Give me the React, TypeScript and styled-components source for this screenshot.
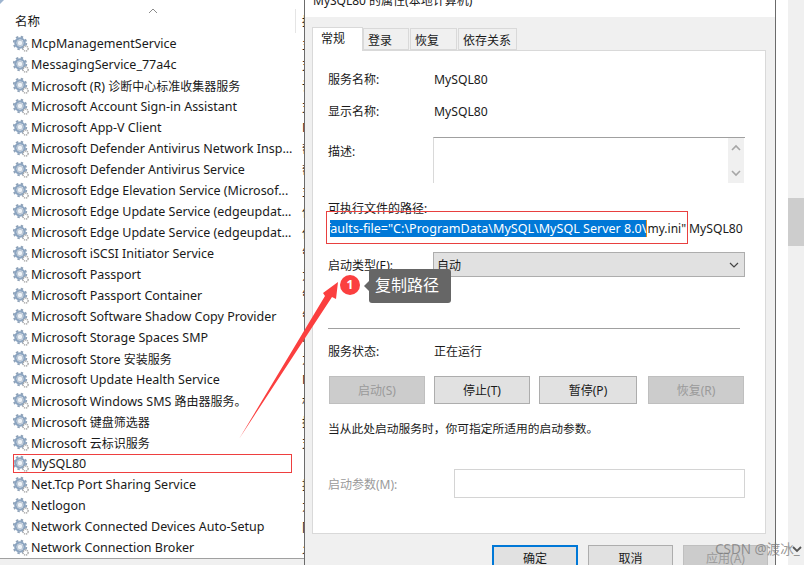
import styled, { createGlobalStyle } from "styled-components";

const GlobalStyle = createGlobalStyle`
  html, body {
    margin: 0;
    padding: 0;
    background: #fff;
  }
  body {
    font-family: "Noto Sans", "Noto Sans CJK SC", sans-serif;
    font-size: 12.5px;
    color: #1a1a1a;
  }
`;

const Screen = styled.div`
  position: relative;
  display: flex;
  width: 811px;
  height: 565px;
  overflow: hidden;
  background: #fff;
`;

/* services list on the left */
const ListPane = styled.div`
  flex: none;
  width: 304px;
  height: 558px;
  border-bottom: 1px solid #a0a0a0;
  overflow: hidden;
`;

const ListHeader = styled.div`
  position: relative;
  display: flex;
  align-items: flex-end;
  height: 33px;
  padding-left: 15px;
  box-sizing: border-box;
  &::before {
    content: "";
    position: absolute;
    left: 0;
    top: 0;
    border-style: solid;
    border-width: 4px 4px 0 0;
    border-color: #9db4cf transparent transparent transparent;
  }
`;

const HeaderName = styled.span`
  flex: none;
  width: 280px;
  height: 24px;
  line-height: 26px;
  border-right: 1px solid #e5e5e5;
`;

const HeaderNext = styled.span`
  padding-left: 6px;
  height: 24px;
  line-height: 26px;
  white-space: nowrap;
`;

const SortArrow = styled.svg`
  position: absolute;
  left: 148px;
  top: 8px;
`;

const Row = styled.div`
  display: flex;
  align-items: center;
  height: 21px;
`;

const NameCell = styled.div<{ $focused?: boolean }>`
  flex: none;
  display: flex;
  align-items: center;
  gap: 2px;
  width: 279px;
  height: 19px;
  margin-left: 13px;
  box-sizing: border-box;
  outline: ${(p) => (p.$focused ? "1px solid #ee3f3f" : "none")};
  outline-offset: -1px;
  white-space: nowrap;
  overflow: hidden;
  & > svg {
    flex: none;
  }
`;

const NameText = styled.span`
  flex: none;
`;

const ListCjk = styled.span`
  font-size: 12px;
`;

const DescCell = styled.div`
  flex: none;
  margin-left: 10px;
  white-space: nowrap;
`;

/* properties dialog */
const Dialog = styled.div`
  flex: none;
  display: flex;
  flex-direction: column;
  width: 472px;
  height: 565px;
  box-sizing: border-box;
  border-left: 1px solid #6b6b6b;
  border-right: 1px solid #6b6b6b;
  background: #f0f0f0;
  font-size: 12px;
  overflow: hidden;
`;

const TitleBar = styled.div`
  flex: none;
  height: 17px;
  background: #fff;
  padding-left: 8px;
  overflow: hidden;
`;

const TitleText = styled.div`
  margin-top: -8px;
  line-height: 18px;
  white-space: nowrap;
`;

const Tabs = styled.div`
  flex: none;
  display: flex;
  align-items: flex-end;
  height: 33px;
  padding-left: 7px;
`;

const Tab = styled.div<{ $active?: boolean; $w: number }>`
  width: ${(p) => p.$w}px;
  height: ${(p) => (p.$active ? 24 : 22)}px;
  margin-right: ${(p) => (p.$active ? 0 : 1)}px;
  margin-bottom: ${(p) => (p.$active ? -1 : 0)}px;
  box-sizing: border-box;
  padding-left: ${(p) => (p.$active ? 8 : 4)}px;
  line-height: ${(p) => (p.$active ? 21 : 24)}px;
  border: 1px solid #d9d9d9;
  border-bottom: ${(p) => (p.$active ? "none" : "1px solid #d9d9d9")};
  background: ${(p) => (p.$active ? "#fff" : "#f0f0f0")};
  position: relative;
  z-index: ${(p) => (p.$active ? 1 : 0)};
`;

const Panel = styled.div`
  flex: none;
  width: 454px;
  height: 484px;
  margin-left: 7px;
  box-sizing: border-box;
  border: 1px solid #d9d9d9;
  background: #fff;
  padding: 18px 0 0 15px;
`;

const FieldRow = styled.div<{ $top: number; $align?: string }>`
  display: flex;
  align-items: ${(p) => p.$align ?? "center"};
  margin-top: ${(p) => p.$top}px;
  min-height: 20px;
`;

const FieldLabel = styled.div<{ $w?: number; $dim?: boolean; $top?: number }>`
  flex: none;
  width: ${(p) => p.$w ?? 106}px;
  height: 20px;
  line-height: 22px;
  margin-top: ${(p) => p.$top ?? 0}px;
  color: ${(p) => (p.$dim ? "#9a9a9a" : "inherit")};
`;

const FieldValue = styled.span`
  font-size: 12.2px;
`;

const Block = styled.div<{ $top: number; $size?: number }>`
  height: 20px;
  line-height: 22px;
  margin-top: ${(p) => p.$top}px;
  font-size: ${(p) => p.$size ?? 12}px;
  white-space: nowrap;
`;

const DescBox = styled.div`
  display: flex;
  justify-content: flex-end;
  width: 312px;
  height: 46px;
  box-sizing: border-box;
  border: 1px solid #d9d9d9;
  border-top-color: #a0a0a0;
  border-right: none;
  border-bottom: none;
`;

const MiniScroll = styled.div`
  display: flex;
  flex-direction: column;
  justify-content: space-between;
  align-items: center;
  width: 16px;
  padding: 6px 0;
  box-sizing: border-box;
  background: #f0f0f0;
  margin-right: 1px;
`;

const PathLine = styled.div`
  display: flex;
  align-items: center;
  margin: -7px 0 0 -2px;
  font-size: 12.55px;
  white-space: nowrap;
`;

const PathBox = styled.div`
  flex: none;
  display: flex;
  align-items: center;
  width: 362px;
  height: 33px;
  padding: 1px 0 0 3px;
  box-sizing: border-box;
  border: 1px solid #e8403f;
  overflow: hidden;
`;

const PathClip = styled.div`
  display: flex;
  overflow: hidden;
  width: 357px;
`;

const Selected = styled.span`
  flex: none;
  margin-left: -4px;
  background: #0078d7;
  color: #fff;
  line-height: 17px;
  border-right: 1px solid #e08a1e;
`;

const PathRest = styled.span`
  flex: none;
  font-size: 12px;
  line-height: 17px;
`;

const PathTail = styled.span`
  margin-left: 1px;
  padding-top: 1px;
  font-size: 12.2px;
`;

const SelectBox = styled.div`
  display: flex;
  align-items: center;
  justify-content: space-between;
  width: 312px;
  height: 25px;
  padding: 0 5px 0 3px;
  box-sizing: border-box;
  border: 1px solid #adadad;
  background: #e1e1e1;
`;

const Divider = styled.div`
  width: 412px;
  height: 1px;
  margin-top: 51px;
  background: #a0a0a0;
`;

const ActionRow = styled.div`
  display: flex;
  gap: 9px;
  width: 415px;
  margin: 15px 0 0 1px;
  & > div {
    line-height: 27px;
  }
`;

const Btn = styled.div<{ $w?: number; $off?: boolean; $primary?: boolean; $last?: boolean }>`
  flex: none;
  width: ${(p) => p.$w ?? 96}px;
  height: 28px;
  margin-left: ${(p) => (p.$last ? "auto" : 0)};
  box-sizing: border-box;
  text-align: center;
  line-height: 25px;
  border: 1px solid ${(p) => (p.$off ? "#bfbfbf" : "#adadad")};
  background: ${(p) => (p.$off ? "#cccccc" : "#e1e1e1")};
  color: ${(p) => (p.$off ? "#9a9a9a" : "inherit")};
  ${(p) => p.$primary && "border: 2px solid #0078d7; line-height: 23px;"}
`;

const ParamInput = styled.div`
  width: 291px;
  height: 29px;
  box-sizing: border-box;
  border: 1px solid #d4d4d4;
`;

const Footer = styled.div`
  flex: none;
  display: flex;
  justify-content: flex-end;
  gap: 10px;
  margin-top: 11px;
  padding-right: 7px;
`;

/* outer scrollbar of the services window */
const SideStrip = styled.div`
  flex: none;
  display: flex;
  width: 35px;
  height: 565px;
  padding-left: 12px;
  box-sizing: border-box;
`;

const ScrollTrack = styled.div`
  position: relative;
  width: 16px;
  height: 565px;
  background: #f0f0f0;
`;

const ScrollThumb = styled.div`
  position: absolute;
  left: 0;
  top: 198px;
  width: 16px;
  height: 48px;
  background: #cdcdcd;
`;

const ScrollDown = styled.svg`
  position: absolute;
  left: 4px;
  top: 546px;
`;

const ListFoot = styled.div`
  position: absolute;
  left: 0;
  top: 559px;
  width: 304px;
  height: 6px;
  background: #f0f0f0;
`;

/* annotations over the window */
const ArrowLayer = styled.svg`
  position: absolute;
  left: 0;
  top: 0;
  pointer-events: none;
`;

const Badge = styled.div`
  position: absolute;
  left: 340px;
  top: 275px;
  width: 20px;
  height: 20px;
  border-radius: 50%;
  background: #fb3f3f;
  color: #fff;
  font-size: 12px;
  font-weight: 700;
  line-height: 20px;
  text-align: center;
`;

const Tip = styled.div`
  position: absolute;
  left: 369px;
  top: 269px;
  width: 82px;
  height: 34px;
  padding-left: 6px;
  box-sizing: border-box;
  border-radius: 3px;
  background: #666;
  color: #fff;
  font-size: 16px;
  line-height: 33px;
  &::before {
    content: "";
    position: absolute;
    left: -5px;
    top: 12px;
    border-style: solid;
    border-width: 5px 5px 5px 0;
    border-color: transparent #666 transparent transparent;
  }
`;

const Watermark = styled.div`
  position: absolute;
  left: 715px;
  top: 540px;
  font-size: 13.5px;
  line-height: 18px;
  color: rgba(120, 120, 120, 0.75);
  white-space: nowrap;
`;

const services: [string, string][] = [
  ["McpManagementService", "主"],
  ["MessagingService_77a4c", "支"],
  ["Microsoft (R) 诊断中心标准收集器服务", "诊"],
  ["Microsoft Account Sign-in Assistant", "支"],
  ["Microsoft App-V Client", "M"],
  ["Microsoft Defender Antivirus Network Insp...", "帮"],
  ["Microsoft Defender Antivirus Service", "帮"],
  ["Microsoft Edge Elevation Service (Microsof...", "主"],
  ["Microsoft Edge Update Service (edgeupdat...", "使"],
  ["Microsoft Edge Update Service (edgeupdat...", "使"],
  ["Microsoft iSCSI Initiator Service", "管"],
  ["Microsoft Passport", "为"],
  ["Microsoft Passport Container", "管"],
  ["Microsoft Software Shadow Copy Provider", "管"],
  ["Microsoft Storage Spaces SMP", "M"],
  ["Microsoft Store 安装服务", "为"],
  ["Microsoft Update Health Service", "M"],
  ["Microsoft Windows SMS 路由器服务。", "根"],
  ["Microsoft 键盘筛选器", "控"],
  ["Microsoft 云标识服务", "支"],
  ["MySQL80", ""],
  ["Net.Tcp Port Sharing Service", "提"],
  ["Netlogon", "为"],
  ["Network Connected Devices Auto-Setup", "网"],
  ["Network Connection Broker", "允"],
];

// list text mixes latin and chinese, and the chinese runs are set smaller
function mixed(text: string) {
  return text.split(/([\u4e00-\u9fff。]+)/).map((part, i) =>
    i % 2 ? <ListCjk key={i}>{part}</ListCjk> : part
  );
}

function Gear() {
  return (
    <svg width="16" height="18" viewBox="0 0 16 18">
      <circle cx="7" cy="8" r="6.3" fill="none" stroke="#8fa2b8" strokeWidth="1.8" strokeDasharray="2.4 2.55" />
      <circle cx="7" cy="8" r="4.6" fill="none" stroke="#8ba4c0" strokeWidth="2.4" />
      <circle cx="7" cy="8" r="2.8" fill="#eef3f8" stroke="#a3b3c4" strokeWidth="0.8" />
      <circle cx="12.6" cy="13.6" r="2.5" fill="#fff" stroke="#a6a6a6" strokeWidth="1.5" strokeDasharray="1.3 0.8" />
      <circle cx="12.6" cy="13.6" r="0.9" fill="#fff" />
    </svg>
  );
}

function Chevron({ up }: { up: boolean }) {
  return (
    <svg width="10" height="7" viewBox="0 0 10 7">
      <path d={up ? "M1 6 L5 2 L9 6" : "M1 1 L5 5 L9 1"} fill="none" stroke="#a6a6a6" strokeWidth="1.6" />
    </svg>
  );
}

export default function App() {
  return (
    <Screen>
      <GlobalStyle />
      <ListPane>
        <ListHeader>
          <HeaderName>名称</HeaderName>
          <HeaderNext>描述</HeaderNext>
          <SortArrow width="10" height="6" viewBox="0 0 10 6">
            <path d="M1 5 L5 1 L9 5" fill="none" stroke="#8a8a8a" strokeWidth="1" />
          </SortArrow>
        </ListHeader>
        {services.map(([name, desc], i) => (
          <Row key={i}>
            <NameCell $focused={name === "MySQL80"}>
              <Gear />
              <NameText>{mixed(name)}</NameText>
            </NameCell>
            <DescCell>{desc}</DescCell>
          </Row>
        ))}
      </ListPane>
      <ListFoot />

      <Dialog>
        <TitleBar>
          <TitleText>MySQL80 的属性(本地计算机)</TitleText>
        </TitleBar>
        <Tabs>
          <Tab $active $w={51}>常规</Tab>
          <Tab $w={46}>登录</Tab>
          <Tab $w={47}>恢复</Tab>
          <Tab $w={59}>依存关系</Tab>
        </Tabs>
        <Panel>
          <FieldRow $top={0}>
            <FieldLabel>服务名称:</FieldLabel>
            <FieldValue>MySQL80</FieldValue>
          </FieldRow>
          <FieldRow $top={12}>
            <FieldLabel>显示名称:</FieldLabel>
            <FieldValue>MySQL80</FieldValue>
          </FieldRow>
          <FieldRow $top={16} $align="flex-start">
            <FieldLabel $w={105} $top={4}>描述:</FieldLabel>
            <DescBox>
              <MiniScroll>
                <Chevron up />
                <Chevron up={false} />
              </MiniScroll>
            </DescBox>
          </FieldRow>
          <Block $top={15}>可执行文件的路径:</Block>
          <PathLine>
            <PathBox>
              <PathClip>
                <Selected>faults-file="C:\ProgramData\MySQL\MySQL Server 8.0\</Selected>
                <PathRest>my.ini"</PathRest>
              </PathClip>
            </PathBox>
            <PathTail>MySQL80</PathTail>
          </PathLine>
          <FieldRow $top={8}>
            <FieldLabel $w={105}>启动类型(E):</FieldLabel>
            <SelectBox>
              <span>自动</span>
              <svg width="10" height="6" viewBox="0 0 10 6">
                <path d="M1 1 L5 5 L9 1" fill="none" stroke="#444" strokeWidth="1.2" />
              </svg>
            </SelectBox>
          </FieldRow>
          <Divider />
          <FieldRow $top={12}>
            <FieldLabel>服务状态:</FieldLabel>
            <FieldLabel $w={100}>正在运行</FieldLabel>
          </FieldRow>
          <ActionRow>
            <Btn $off>启动(S)</Btn>
            <Btn>停止(T)</Btn>
            <Btn $w={98}>暂停(P)</Btn>
            <Btn $off $last>恢复(R)</Btn>
          </ActionRow>
          <Block $top={13} $size={11.75}>当从此处启动服务时，你可指定所适用的启动参数。</Block>
          <FieldRow $top={32}>
            <FieldLabel $w={126} $dim>启动参数(M):</FieldLabel>
            <ParamInput />
          </FieldRow>
        </Panel>
        <Footer>
          <Btn $w={86} $primary>确定</Btn>
          <Btn $w={85}>取消</Btn>
          <Btn $w={85} $off>应用(A)</Btn>
        </Footer>
      </Dialog>

      <SideStrip>
        <ScrollTrack>
          <ScrollThumb />
          <ScrollDown width="10" height="7" viewBox="0 0 10 7">
            <path d="M1 1 L5 5 L9 1" fill="none" stroke="#555" strokeWidth="1.8" />
          </ScrollDown>
        </ScrollTrack>
      </SideStrip>

      <ArrowLayer width="811" height="565" viewBox="0 0 811 565">
        <path d="M239 439 L325 296 L323 293 L338 282 L336 299 L332 297 Z" fill="#fb3f3f" />
      </ArrowLayer>
      <Badge>1</Badge>
      <Tip>复制路径</Tip>
      <Watermark>CSDN @渡冰_</Watermark>
    </Screen>
  );
}
